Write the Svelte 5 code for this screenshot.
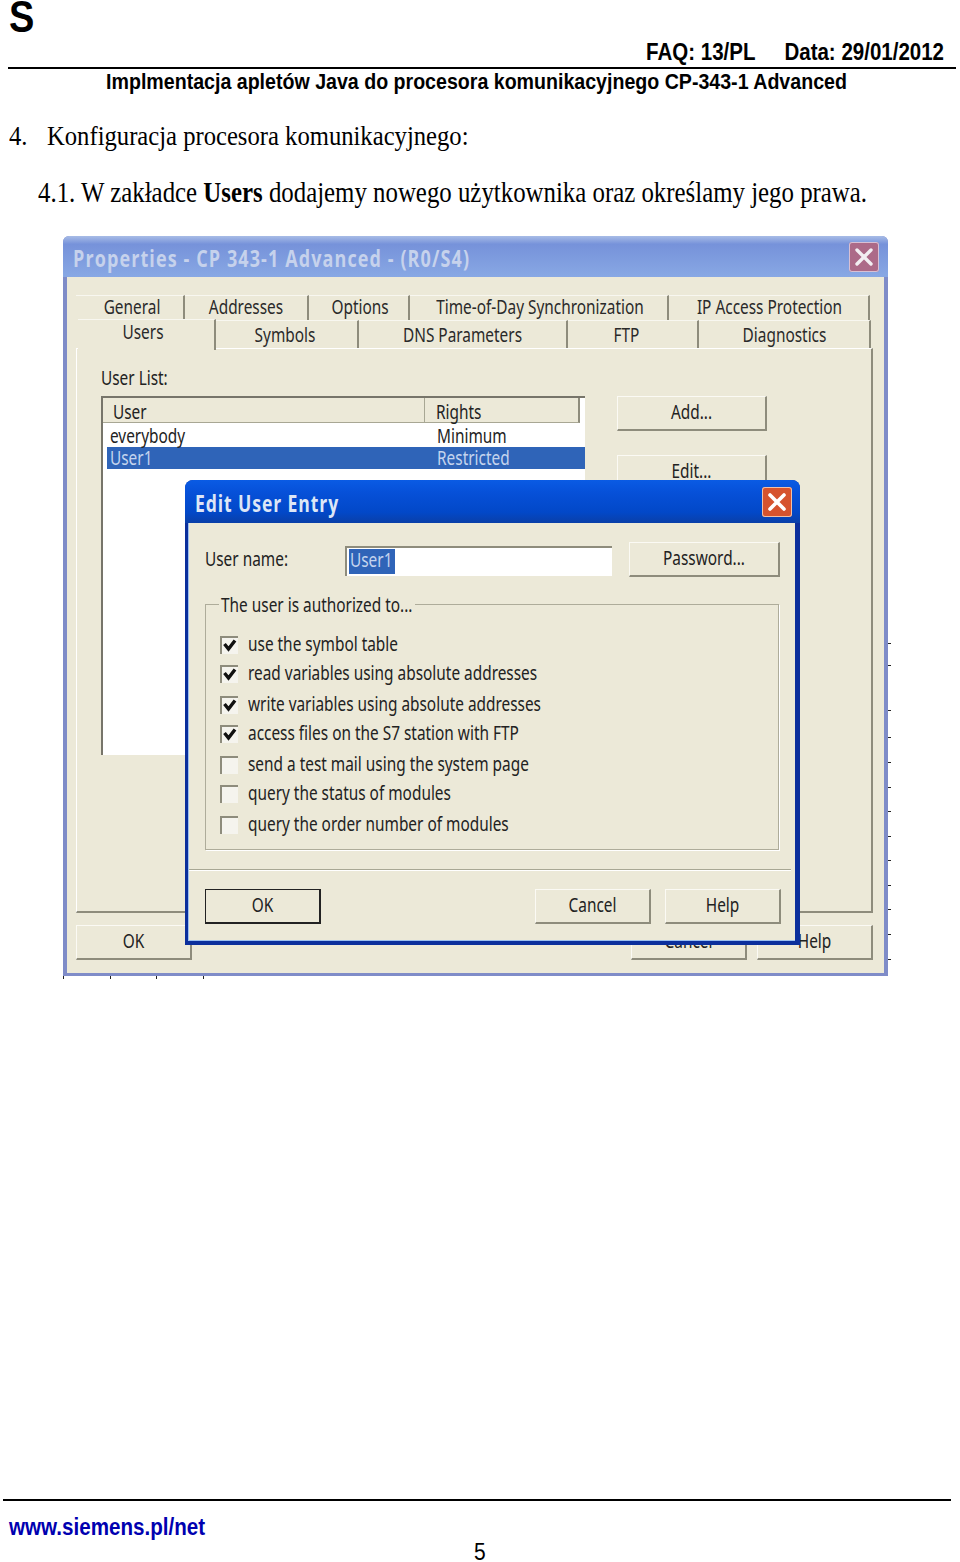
<script lang="ts">
	// shift nudges the label off centre, the way it sits in the original dialog
	const topTabs = [
		{ label: 'General', width: 109, shift: 5 },
		{ label: 'Addresses', width: 124, shift: 0 },
		{ label: 'Options', width: 101, shift: 3 },
		{ label: 'Time-of-Day Synchronization', width: 259, shift: 3 },
		{ label: 'IP Access Protection', width: 201, shift: 2 }
	];
	const bottomTabs = [
		{ label: 'Symbols', width: 143, shift: -3 },
		{ label: 'DNS Parameters', width: 209, shift: 0 },
		{ label: 'FTP', width: 131, shift: -12 },
		{ label: 'Diagnostics', width: 172, shift: 1 }
	];
	const rights = [
		{ label: 'use the symbol table', checked: true },
		{ label: 'read variables using absolute addresses', checked: true },
		{ label: 'write variables using absolute addresses', checked: true },
		{ label: 'access files on the S7 station with FTP', checked: true },
		{ label: 'send a test mail using the system page', checked: false },
		{ label: 'query the status of modules', checked: false },
		{ label: 'query the order number of modules', checked: false }
	];
	// stray marks left along the window edge in the scan
	const sideTicks = [407, 429, 474, 501, 526, 551, 575, 600, 624, 649, 673, 698, 723];
	const bottomTicks = [0, 47, 93, 140];
</script>

<div class="page">
	<header class="doc-head">
		<div class="logo"><span>S</span></div>
		<div class="meta">
			<span>FAQ: 13/PL</span>
			<span>Data: 29/01/2012</span>
		</div>
		<div class="subtitle"><span>Implmentacja apletów Java do procesora komunikacyjnego CP-343-1 Advanced</span></div>
	</header>

	<h2 class="section"><span class="num">4.</span><span>Konfiguracja procesora komunikacyjnego:</span></h2>
	<p class="step"><span>4.1. W zakładce <b>Users</b> dodajemy nowego użytkownika oraz określamy jego prawa.</span></p>

	<div class="window">
		<div class="titlebar">
			<span class="title">Properties - CP 343-1 Advanced - (R0/S4)</span>
			<div class="close">
				<svg viewBox="0 0 30 30" width="30" height="30"><path d="M8 8 22 22M22 8 8 22" stroke="#f2eef2" stroke-width="3.4" stroke-linecap="round" /></svg>
			</div>
		</div>

		<div class="win-body">
			<div class="tabs top">
				{#each topTabs as tab}
					<div class="tab" style="width: {tab.width}px"><span style="margin-left: {tab.shift}px">{tab.label}</span></div>
				{/each}
			</div>
			<div class="tabs bottom">
				<div class="tab active"><span>Users</span></div>
				{#each bottomTabs as tab}
					<div class="tab" style="width: {tab.width}px"><span style="margin-left: {tab.shift}px">{tab.label}</span></div>
				{/each}
			</div>

			<div class="panel">
				<div class="list-label"><span>User List:</span></div>
				<div class="panel-row">
					<div class="listbox">
						<div class="list-head">
							<div class="col-user"><span>User</span></div>
							<div class="col-rights"><span>Rights</span></div>
						</div>
						<div class="list-row first">
							<div class="col-user"><span>everybody</span></div>
							<div class="col-rights"><span>Minimum</span></div>
						</div>
						<div class="list-row selected">
							<div class="col-user"><span>User1</span></div>
							<div class="col-rights"><span>Restricted</span></div>
						</div>
					</div>
					<div class="side-buttons">
						<button class="btn"><span>Add...</span></button>
						<button class="btn"><span>Edit...</span></button>
					</div>
				</div>
			</div>

			<div class="win-actions">
				<button class="btn"><span>OK</span></button>
				<button class="btn push"><span>Cancel</span></button>
				<button class="btn"><span>Help</span></button>
			</div>
		</div>

		{#each sideTicks as y}
			<i class="tick-side" style="top: {y}px"></i>
		{/each}
		{#each bottomTicks as x}
			<i class="tick-bottom" style="left: {x}px"></i>
		{/each}

		<div class="dialog">
			<div class="dlg-title">
				<span class="title">Edit User Entry</span>
				<div class="dlg-close">
					<svg viewBox="0 0 30 30" width="30" height="30"><path d="M8 8 22 22M22 8 8 22" stroke="#fff" stroke-width="3.6" stroke-linecap="round" /></svg>
				</div>
			</div>
			<div class="dlg-body">
				<div class="name-row">
					<label class="name-label" for="user-name"><span>User name:</span></label>
					<div class="input" id="user-name"><span class="sel"><span>User1</span></span></div>
					<button class="btn pass"><span>Password...</span></button>
				</div>

				<fieldset class="group">
					<legend><span>The user is authorized to...</span></legend>
					{#each rights as right}
						<div class="check-row">
							<div class="box">
								{#if right.checked}
									<svg viewBox="0 0 16 16" width="16" height="16"><path d="M2.5 6 6.5 11 13 2.5" fill="none" stroke="#111" stroke-width="3.4" /></svg>
								{/if}
							</div>
							<span class="check-text">{right.label}</span>
						</div>
					{/each}
				</fieldset>

				<div class="separator"></div>

				<div class="dlg-actions">
					<button class="btn default"><span>OK</span></button>
					<button class="btn push"><span>Cancel</span></button>
					<button class="btn"><span>Help</span></button>
				</div>
			</div>
		</div>
	</div>

	<footer class="doc-foot">
		<div class="link"><span>www.siemens.pl/net</span></div>
		<div class="page-no"><span>5</span></div>
	</footer>
</div>

<style>
	:global(body) {
		background: #fff;
	}

	.page {
		display: flex;
		flex-direction: column;
		width: 960px;
		height: 1562px;
		overflow: hidden;
		color: #000;
		font-family: 'Liberation Sans', sans-serif;
	}

	/* the source page was stretched vertically, so the text is too */
	.logo span,
	.meta span,
	.subtitle span,
	.section span,
	.step span,
	.link span,
	.page-no span {
		display: inline-block;
		line-height: 1.1;
		transform: scaleY(1.15);
	}

	/* the dialog screenshot is narrower than it is tall, more so than the page */
	.title,
	.tab span,
	.list-label span,
	.list-head span,
	.list-row span,
	.btn span,
	.name-label span,
	.sel span,
	legend span,
	.check-text {
		display: inline-block;
		line-height: 1;
		transform: scaleY(1.28);
	}

	.doc-head {
		display: flex;
		flex-direction: column;
		height: 96px;
	}

	.logo {
		height: 34px;
		padding-left: 9px;
		font-size: 38px;
		font-weight: 700;
		line-height: 34px;
	}

	.logo span {
		line-height: 28px;
	}

	.meta {
		display: flex;
		align-items: flex-end;
		justify-content: flex-end;
		gap: 29px;
		box-sizing: border-box;
		height: 35px;
		margin: 0 4px 0 8px;
		padding: 0 12px 3px 0;
		border-bottom: 2px solid #000;
		font-size: 20.5px;
		font-weight: 700;
	}

	.subtitle {
		padding-right: 7px;
		font-size: 19.6px;
		font-weight: 700;
		line-height: 24px;
		text-align: center;
	}

	.section,
	.step {
		margin: 0;
		font-family: 'Liberation Serif', serif;
		font-weight: 400;
		line-height: 30px;
	}

	.section {
		display: flex;
		margin-top: 26px;
		padding-left: 9px;
		font-size: 24.65px;
	}

	.num {
		width: 38px;
	}

	.step {
		margin-top: 29px;
		padding-left: 38px;
		font-size: 24.85px;
	}

	.window {
		position: relative;
		display: flex;
		flex-direction: column;
		box-sizing: border-box;
		width: 825px;
		height: 740px;
		margin: 28px 0 0 63px;
		background: #7f8cc8;
		border-radius: 6px 6px 0 0;
		font-family: 'Noto Sans', sans-serif;
		font-size: 15.4px;
		color: #222;
	}

	.titlebar {
		display: flex;
		align-items: center;
		justify-content: space-between;
		height: 41px;
		padding: 0 9px 0 10px;
		background: linear-gradient(#a8bce6, #7692da 20%, #88a8e4);
		border-radius: 6px 6px 0 0;
	}

	.title {
		font-family: 'Open Sans', sans-serif;
		font-weight: 700;
		font-size: 18px;
		letter-spacing: 1.1px;
		color: #c6d2ec;
		white-space: nowrap;
		transform: translateY(1px) scaleY(1.28);
	}

	.close,
	.dlg-close {
		width: 30px;
		height: 30px;
		border-radius: 3px;
		background: #ac6a88;
		box-shadow: inset 0 0 0 1px #d8c0d4;
	}

	.win-body {
		display: flex;
		flex: 1;
		flex-direction: column;
		margin: 0 4px 3px 4px;
		padding: 18px 11px 0 9px;
		background: #ece9d8;
	}

	.tabs {
		display: flex;
		flex: none;
		text-align: center;
	}

	.tabs.top {
		height: 25px;
		line-height: 24px;
	}

	.tabs.bottom {
		height: 28px;
		line-height: 29px;
		padding-left: 2px;
	}

	.tab {
		flex: none;
		box-sizing: border-box;
		border-top: 1px solid #f8f7f0;
		border-right: 2px solid #8e8c7c;
		white-space: nowrap;
		color: #2a2a2a;
	}

	.tab.active {
		position: relative;
		z-index: 1;
		width: 138px;
		height: 31px;
		margin-top: -1px;
		padding-right: 6px;
		background: #ece9d8;
		line-height: 26px;
	}

	.panel {
		flex: none;
		box-sizing: border-box;
		height: 565px;
		padding: 18px 0 0 24px;
		border-top: 1px solid #fff;
		border-right: 2px solid #8e8c7c;
		border-bottom: 2px solid #8e8c7c;
		border-left: 1px solid #fff;
	}

	.list-label {
		height: 29px;
		line-height: 24px;
	}

	.panel-row {
		display: flex;
		gap: 32px;
	}

	.listbox {
		box-sizing: border-box;
		width: 484px;
		height: 359px;
		background: #fff;
		border-top: 2px solid #77756a;
		border-left: 2px solid #77756a;
	}

	.list-head {
		display: flex;
		box-sizing: border-box;
		height: 25px;
		margin-right: 5px;
		background: #ece9d8;
		border-right: 2px solid #8e8c7c;
		border-bottom: 1px solid #a8a794;
		line-height: 29px;
	}

	.list-head .col-user {
		box-sizing: border-box;
		width: 322px;
		padding-left: 10px;
		border-right: 1px solid #a8a794;
	}

	.list-head .col-rights {
		padding-left: 11px;
	}

	.list-row {
		display: flex;
		height: 22px;
		line-height: 24px;
	}

	.list-row.first {
		height: 24px;
		line-height: 28px;
	}

	.list-row .col-user {
		box-sizing: border-box;
		width: 327px;
		padding-left: 7px;
	}

	.list-row .col-rights {
		padding-left: 7px;
	}

	.list-row.selected {
		margin-left: 4px;
		background: #2f64b8;
		color: #c4d4ee;
	}

	.list-row.selected .col-user {
		width: 323px;
		padding-left: 3px;
	}

	.side-buttons {
		display: flex;
		flex-direction: column;
		gap: 24px;
		width: 150px;
	}

	.btn {
		box-sizing: border-box;
		width: 116px;
		height: 35px;
		padding: 0 0 1px;
		background: #ece9d8;
		border: 0;
		border-top: 1px solid #fbfaf4;
		border-left: 1px solid #fbfaf4;
		border-right: 2px solid #8e8c7c;
		border-bottom: 2px solid #8e8c7c;
		font: inherit;
		color: inherit;
	}

	.side-buttons .btn {
		width: 150px;
	}

	.win-actions {
		display: flex;
		gap: 10px;
		margin-top: 12px;
	}

	.push {
		margin-left: auto;
	}

	.tick-side {
		position: absolute;
		left: 825px;
		width: 3px;
		height: 1px;
		background: #222;
	}

	.tick-bottom {
		position: absolute;
		top: 740px;
		width: 1px;
		height: 3px;
		background: #222;
	}

	.dialog {
		position: absolute;
		left: 122px;
		top: 244px;
		display: flex;
		flex-direction: column;
		box-sizing: border-box;
		width: 615px;
		height: 465px;
		padding-bottom: 4px;
		background: #0b2f9c;
		border-radius: 8px 8px 0 0;
	}

	.dlg-title {
		display: flex;
		align-items: center;
		justify-content: space-between;
		flex: none;
		height: 43px;
		padding: 0 8px 0 10px;
		background: linear-gradient(#0a5be4, #0650d8 30%, #0248c8 75%, #0a3fa8);
		border-radius: 8px 8px 0 0;
	}

	.dlg-title .title {
		font-size: 17.6px;
		letter-spacing: 0.9px;
		color: #dde6f6;
		transform: translateY(2px) scaleY(1.28);
	}

	.dlg-close {
		background: #d6532e;
		box-shadow: inset 0 0 0 1px #f0c0a8;
	}

	.dlg-body {
		display: flex;
		flex: 1;
		flex-direction: column;
		margin: 0 5px 0 3px;
		padding: 0 14px 0 17px;
		background: #ece9d8;
		box-shadow: inset 1px 0 0 #9cc0f0, inset 0 -1px 0 #9cc0f0;
	}

	.name-row {
		display: flex;
		align-items: center;
		height: 35px;
		margin-top: 19px;
	}

	.name-label {
		flex: none;
		width: 140px;
		padding-bottom: 1px;
	}

	.input {
		box-sizing: border-box;
		width: 267px;
		height: 30px;
		margin-top: 2px;
		padding: 1px 0 0 2px;
		background: #fff;
		border-top: 2px solid #8e8c7c;
		border-left: 2px solid #8e8c7c;
		line-height: 24px;
	}

	.sel {
		display: inline-block;
		box-sizing: border-box;
		width: 46px;
		height: 25px;
		padding-left: 1px;
		background: #2f64b8;
		color: #c4d4ee;
	}

	.btn.pass {
		width: 151px;
		margin-left: 17px;
	}

	.group {
		box-sizing: border-box;
		height: 255px;
		margin: 18px 2px 0 0;
		padding: 23px 0 0 14px;
		border: 1px solid #aeac9a;
		box-shadow: 1px 1px 0 #fff;
		min-width: 0;
	}

	legend {
		margin-left: -1px;
		padding: 0 2px;
		line-height: 18px;
	}

	legend span {
		transform: translateY(2px) scaleY(1.28);
	}

	.check-row {
		display: flex;
		align-items: flex-start;
		height: 29px;
	}

	.check-row:nth-of-type(even) {
		height: 31px;
	}

	.box {
		box-sizing: border-box;
		flex: none;
		width: 18px;
		height: 18px;
		margin-right: 10px;
		background: #f5f4ee;
		border-top: 2px solid #8e8c7c;
		border-left: 2px solid #8e8c7c;
	}

	.box svg {
		display: block;
	}

	.check-text {
		line-height: 18px;
		white-space: nowrap;
	}

	.separator {
		flex: none;
		height: 1px;
		margin: 19px -10px 0 -16px;
		background: #a8a794;
		box-shadow: 0 1px 0 #fff;
	}

	.dlg-actions {
		display: flex;
		gap: 14px;
		margin-top: 19px;
	}

	.btn.default {
		border: 2px solid #222;
		border-top-width: 1px;
		border-left-width: 1px;
	}

	.doc-foot {
		position: relative;
		box-sizing: border-box;
		height: 63px;
		margin: auto 9px 0 3px;
		border-top: 2px solid #000;
	}

	.link {
		padding: 13px 0 0 6px;
		font-size: 20.6px;
		font-weight: 700;
		color: #0000b0;
		line-height: 26px;
	}

	.page-no {
		position: absolute;
		left: 471px;
		top: 41px;
		font-size: 21px;
		line-height: 20px;
	}

	.page-no span {
		line-height: 18px;
	}
</style>
